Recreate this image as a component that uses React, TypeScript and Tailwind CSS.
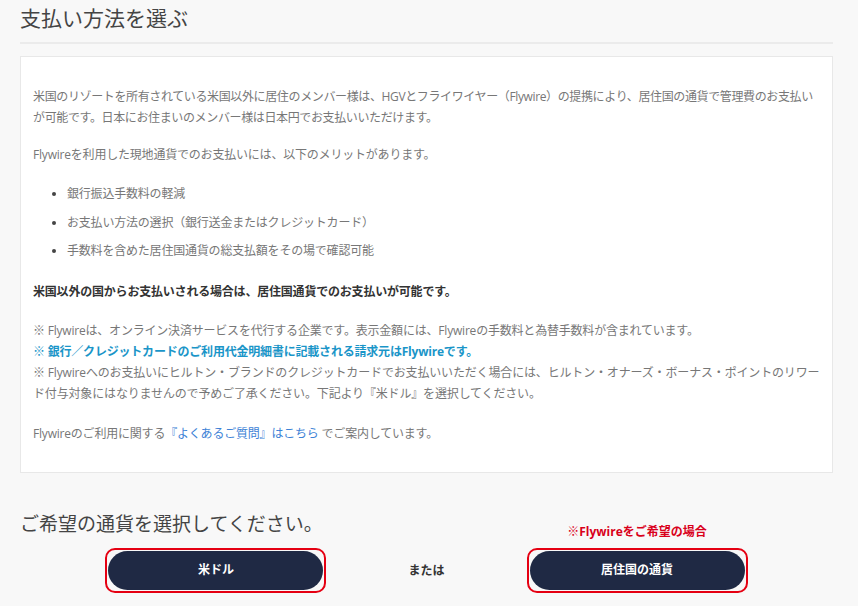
const FONT = "font-['Open_Sans','Noto_Sans_CJK_JP',sans-serif]";

function ChoiceButton({ label }: { label: string }) {
  return (
    <div className="rounded-[10px] border-2 border-[#e50012] p-[1px]">
      <button className="flex h-[39px] w-[215px] items-center justify-center rounded-full bg-[#1f2944] text-[12px] font-bold text-white">
        {label}
      </button>
    </div>
  );
}

export default function App() {
  return (
    <div className={`${FONT} min-h-[606px] w-[858px] bg-[#f8f8f8]`}>
      <div className="ml-[20px] w-[813px]">
        <h1 className="pt-[3px] text-[21px] leading-[30px] text-[#444]">支払い方法を選ぶ</h1>
        <div className="mt-[9px] h-[2px] bg-[#ebebeb]" />

        <div className="mt-[12px] border border-[#e8e8e8] bg-white px-[12px] pb-[28px] pt-[29px] text-[12px] tracking-[-0.2px] text-[#777]">
          <p className="leading-[21px] tracking-[-0.37px]">
            米国のリゾートを所有されている米国以外に居住のメンバー様は、HGVとフライワイヤー（Flywire）の提携により、居住国の通貨で管理費のお支払いが可能です。日本にお住まいのメンバー様は日本円でお支払いいただけます。
          </p>
          <p className="mt-[16px] leading-[21px]">Flywireを利用した現地通貨でのお支払いには、以下のメリットがあります。</p>
          <ul className="mt-[15px] list-disc pl-[34px] leading-[28.5px] marker:text-[#444]">
            <li>銀行振込手数料の軽減</li>
            <li>お支払い方法の選択（銀行送金またはクレジットカード）</li>
            <li>手数料を含めた居住国通貨の総支払額をその場で確認可能</li>
          </ul>
          <p className="mt-[15px] font-bold leading-[21px] text-[#333]">
            米国以外の国からお支払いされる場合は、居住国通貨でのお支払いが可能です。
          </p>
          <div className="mt-[18px] leading-[21.3px]">
            <p>※ Flywireは、オンライン決済サービスを代行する企業です。表示金額には、Flywireの手数料と為替手数料が含まれています。</p>
            <p className="font-bold text-[#1a95c8]">※ 銀行／クレジットカードのご利用代金明細書に記載される請求元はFlywireです。</p>
            <p className="tracking-[-0.16px]">
              ※ Flywireへのお支払いにヒルトン・ブランドのクレジットカードでお支払いいただく場合には、ヒルトン・オナーズ・ボーナス・ポイントのリワード付与対象にはなりませんので予めご了承ください。下記より『米ドル』を選択してください。
            </p>
          </div>
          <p className="mt-[18px] leading-[21px]">
            Flywireのご利用に関する<a className="text-[#3d82d6]">『よくあるご質問』はこちら</a> でご案内しています。
          </p>
        </div>

        <h2 className="mt-[38px] text-[19px] leading-[26px] text-[#444]">ご希望の通貨を選択してください。</h2>

        <div className="-mt-[13px] flex items-end justify-center gap-[82px]">
          <ChoiceButton label="米ドル" />
          <div className="flex h-[44px] items-center text-[12px] font-bold text-[#333]">または</div>
          <div className="flex flex-col items-center">
            <div className="mb-[8px] text-[12px] font-bold leading-[16px] text-[#d9001b]">※Flywireをご希望の場合</div>
            <ChoiceButton label="居住国の通貨" />
          </div>
        </div>
      </div>
    </div>
  );
}
